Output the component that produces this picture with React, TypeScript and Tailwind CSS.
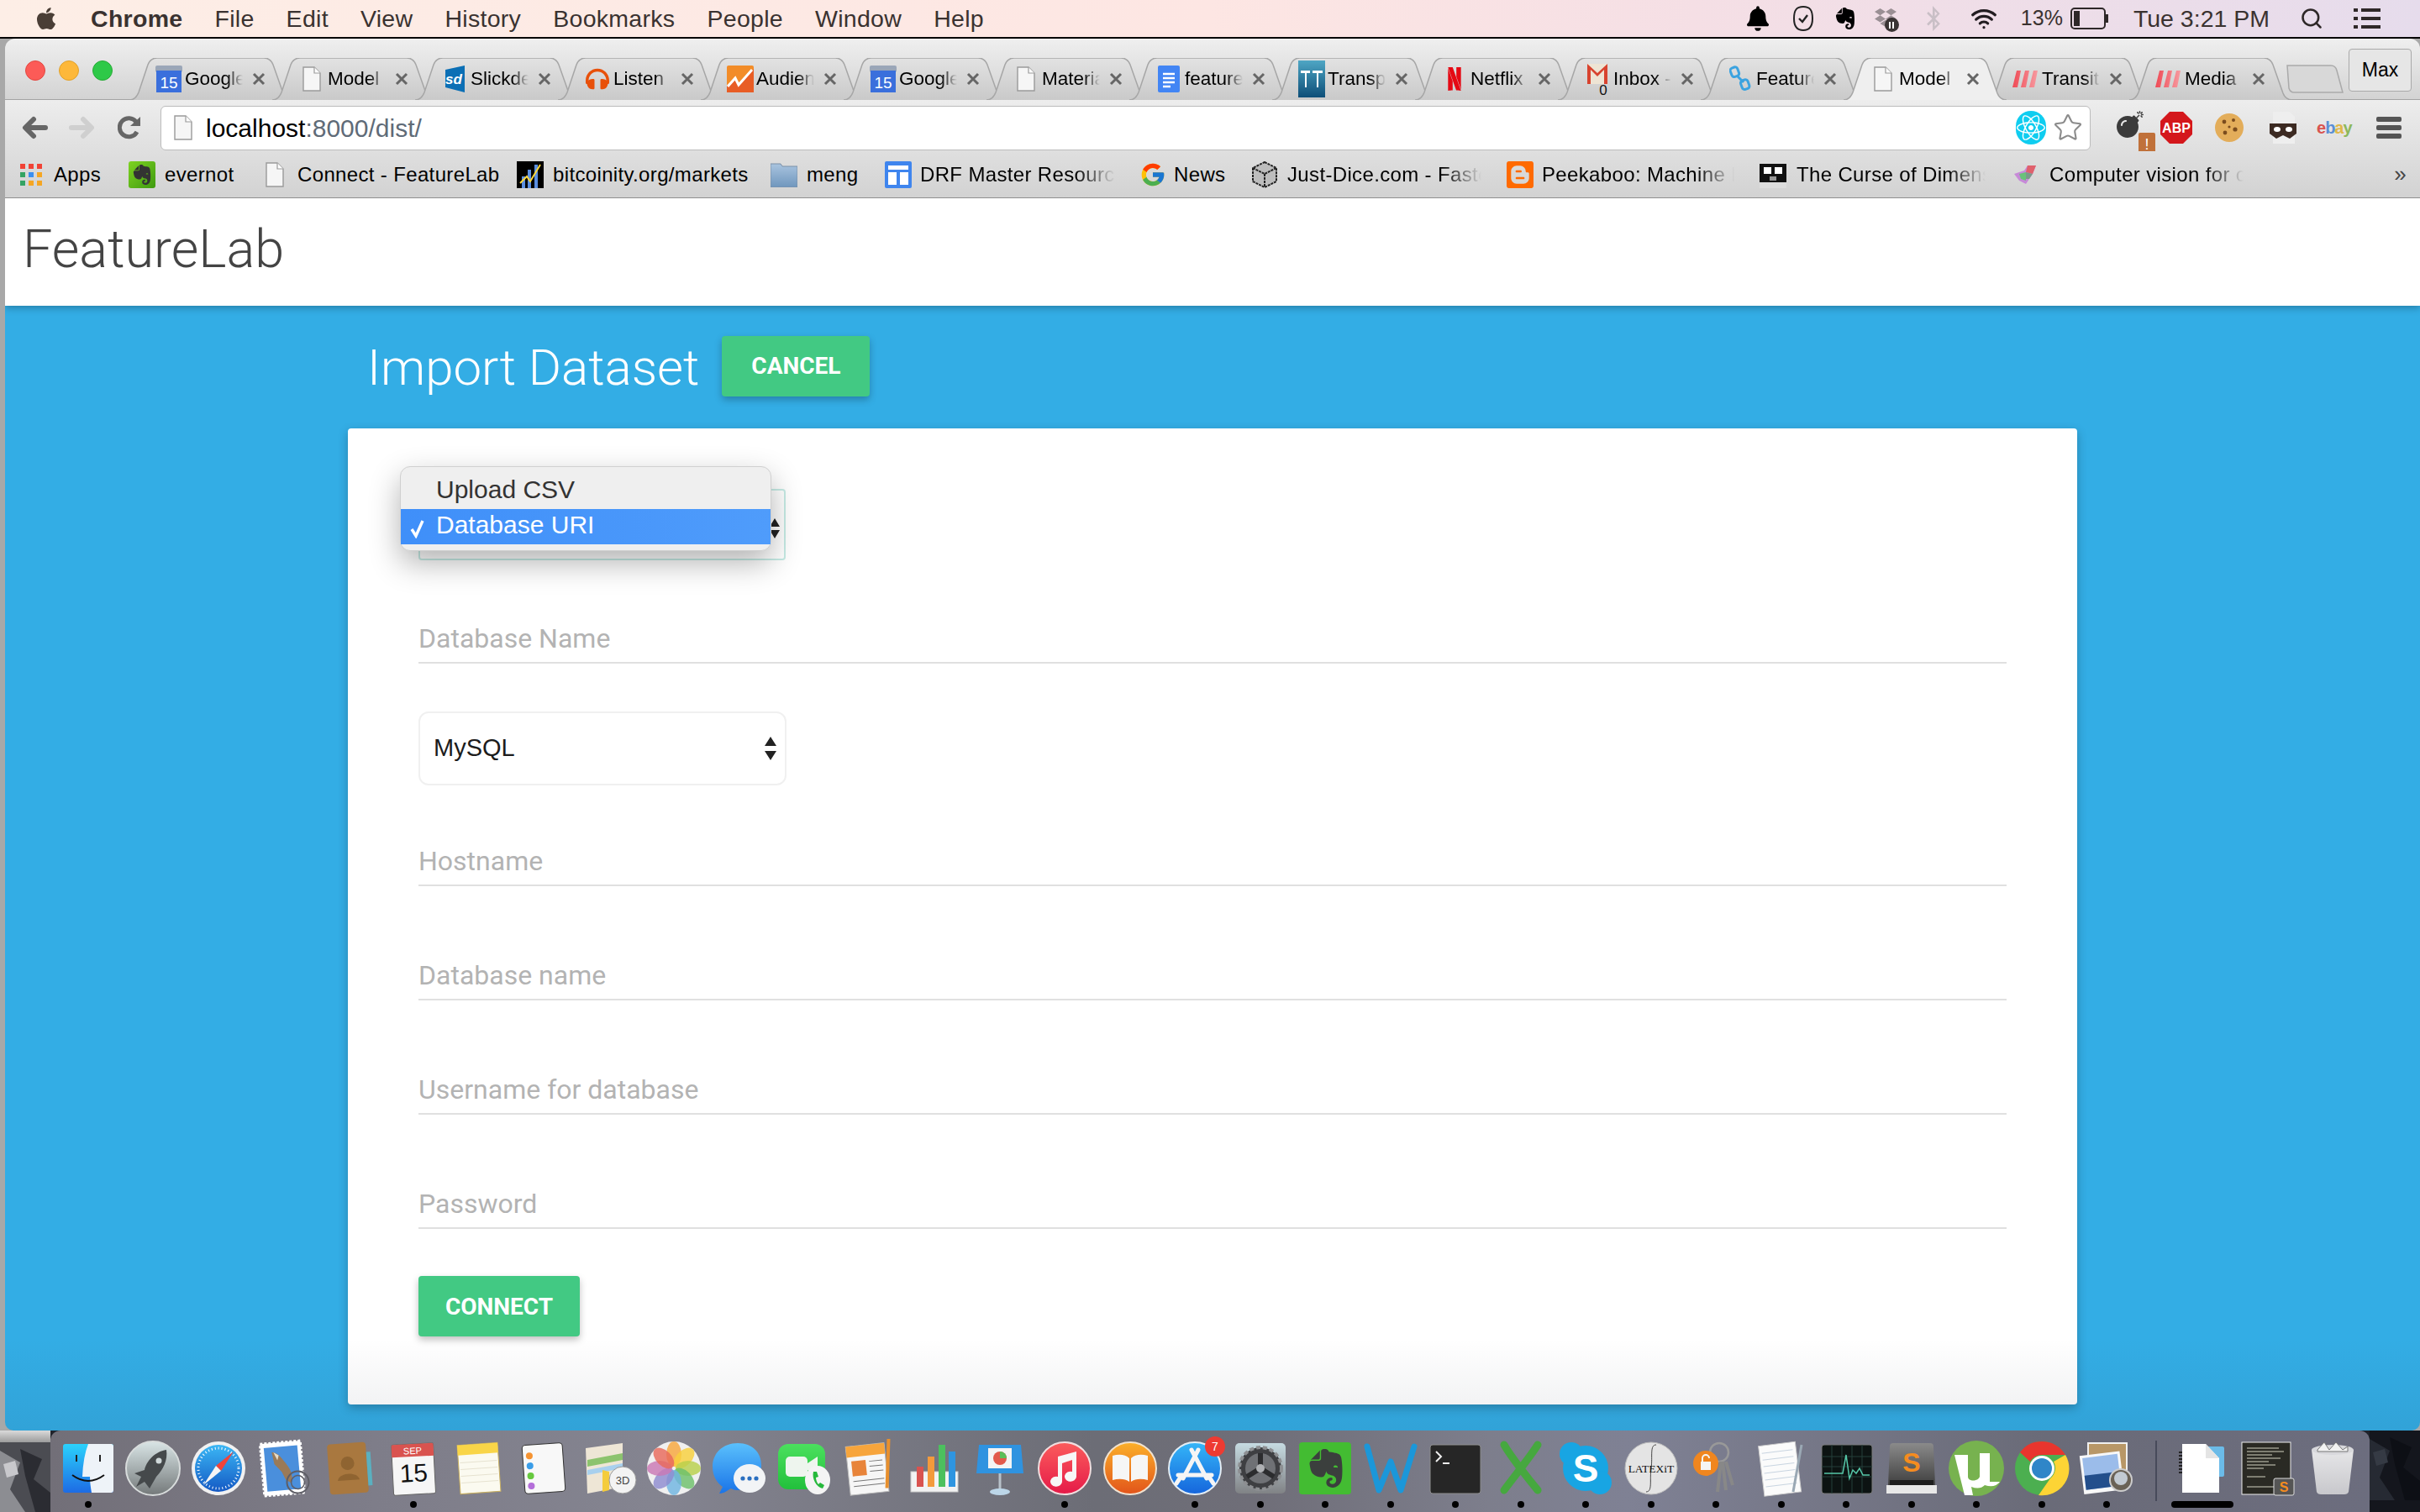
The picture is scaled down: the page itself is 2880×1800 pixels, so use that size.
import type { ReactNode } from "react";
import { FaApple, FaBell, FaBluetoothB, FaBomb, FaDropbox, FaHeadphones, FaReact } from "react-icons/fa";
import { FcGoogle } from "react-icons/fc";
import { SiBlogger, SiEvernote, SiNetflix } from "react-icons/si";
import { Search, Star, Wifi } from "lucide-react";

const Paper = () => (
  <svg width="22" height="30" viewBox="0 0 22 30">
    <path d="M1 1H14L21 8V29H1Z" fill="#f6f6f6" stroke="#9a9a9a" strokeWidth="1.4" />
    <path d="M14 1V8H21" fill="#fff" stroke="#9a9a9a" strokeWidth="1.2" />
  </svg>
);

const GCal = () => (
  <svg width="32" height="32" viewBox="0 0 32 32">
    <rect x="0" y="0" width="32" height="8" rx="2" fill="#9aa6b8" />
    <path d="M1 6H31V32H1Z" fill="#3a6fdc" />
    <text x="16" y="27" textAnchor="middle" fontSize="19" fill="#fff">15</text>
  </svg>
);

const Slick = () => (
  <svg width="32" height="32" viewBox="0 0 32 32">
    <path d="M5 5L28 0V32L5 26Z" fill="#0b6fb5" />
    <text x="15" y="22" textAnchor="middle" fontSize="17" fontWeight="700" fontStyle="italic" fill="#fff">sd</text>
  </svg>
);

const Audience = () => (
  <svg width="32" height="32" viewBox="0 0 32 32">
    <rect width="32" height="32" rx="2" fill="#f28c28" />
    <path d="M0 32V24L10 14L14 22L32 4V32Z" fill="#e85d25" />
    <path d="M1 25L10 15L14 23L30 5" fill="none" stroke="#fff" strokeWidth="3" />
  </svg>
);

const GDoc = () => (
  <svg width="26" height="32" viewBox="0 0 26 32">
    <rect width="26" height="32" rx="2" fill="#4285f4" />
    <path d="M6 10H20M6 15H20M6 20H20M6 25H15" stroke="#fff" strokeWidth="2.4" />
  </svg>
);

const TT = () => (
  <svg width="32" height="44" viewBox="0 0 32 44">
    <defs>
      <linearGradient id="ttg" x1="0" y1="0" x2="0" y2="1">
        <stop offset="0" stopColor="#4ea6c4" />
        <stop offset="1" stopColor="#0d4e78" />
      </linearGradient>
    </defs>
    <rect width="32" height="44" fill="url(#ttg)" />
    <path d="M3 12H14V15H10V32H8V15H3ZM17 12H29V15H24V32H22V15H17Z" fill="#fff" />
  </svg>
);

const Inbox = () => (
  <svg width="26" height="40" viewBox="0 0 26 40">
    <rect x="1" y="2" width="24" height="24" fill="#eee4d4" />
    <path d="M1 2V26H5V9L13 17L21 9V26H25V2L13 13Z" fill="#d8432f" />
    <text x="20" y="39" textAnchor="middle" fontSize="17" fill="#111">0</text>
  </svg>
);

const Links = () => (
  <svg width="26" height="32" viewBox="0 0 26 32" fill="none" stroke="#3ba3e0" strokeWidth="3">
    <rect x="2" y="2" width="9" height="11" rx="3" transform="rotate(-20 7 8)" />
    <rect x="14" y="17" width="9" height="11" rx="3" transform="rotate(-20 19 22)" />
    <path d="M9 12L17 20" />
  </svg>
);

const Transit = () => (
  <svg width="32" height="22" viewBox="0 0 32 22">
    <defs>
      <linearGradient id="trg" x1="0" y1="0" x2="1" y2="0">
        <stop offset="0" stopColor="#ef4a55" />
        <stop offset="1" stopColor="#f79aa0" />
      </linearGradient>
    </defs>
    <path d="M5 1H10L6 21H0ZM15 1H20L16 21H10ZM25 1H30L26 21H20Z" fill="url(#trg)" />
  </svg>
);

type TabData = { title: string; icon: ReactNode; active?: boolean };

const tabs: TabData[] = [
  { title: "Google Calendar", icon: <GCal /> },
  { title: "Model", icon: <Paper /> },
  { title: "Slickdeals", icon: <Slick /> },
  { title: "Listen", icon: <FaHeadphones className="text-[#e8500a] w-[28px] h-[28px]" /> },
  { title: "Audience", icon: <Audience /> },
  { title: "Google Calendar", icon: <GCal /> },
  { title: "Materialize", icon: <Paper /> },
  { title: "feature", icon: <GDoc /> },
  { title: "Transport", icon: <TT /> },
  { title: "Netflix", icon: <SiNetflix className="text-[#e50914] w-[28px] h-[30px]" /> },
  { title: "Inbox -", icon: <Inbox /> },
  { title: "Feature", icon: <Links /> },
  { title: "Model", icon: <Paper />, active: true },
  { title: "Transit", icon: <Transit /> },
  { title: "Media", icon: <Transit /> },
];

function Tab({ tab, i }: { tab: TabData; i: number }) {
  return (
    <div className={`relative w-[194px] h-[50px] shrink-0 ${i > 0 ? "-ml-[24px]" : ""} ${tab.active ? "z-10" : ""}`}>
      <svg className="absolute inset-0" width="194" height="50" viewBox="0 0 194 50">
        <path
          d="M0 50C6 50 9 46 11 41L22 8C24 3 27 0 33 0H160C166 0 169 3 171 8L183 42C185 47 188 50 194 50"
          fill={tab.active ? "#efefef" : "url(#tabfill)"}
          stroke="#a6a6a6"
          strokeWidth="1.5"
        />
      </svg>
      <div className="relative flex items-center h-full pl-[31px]">
        <div className="w-[32px] h-[32px] flex items-center justify-center shrink-0">{tab.icon}</div>
        <span className="ml-[3px] w-[69px] overflow-hidden whitespace-nowrap text-[22.5px] text-black [mask-image:linear-gradient(90deg,#000_72%,transparent)]">
          {tab.title}
        </span>
        <svg className="ml-[11px] shrink-0" width="16" height="16" viewBox="0 0 16 16">
          <path d="M2 2L14 14M14 2L2 14" stroke="#666" strokeWidth="3" />
        </svg>
      </div>
    </div>
  );
}

function MenuBar() {
  return (
    <div className="h-[44px] flex items-center text-[28.5px] text-[#3a3230] bg-[linear-gradient(90deg,#fdeee6,#fde6e3_50%,#f5dfe5_70%,#e6dcec)]">
      <FaApple className="ml-[41px] w-[28px] h-[30px] text-[#4a3e36]" />
      <div className="ml-[39px] flex gap-[38px] tracking-[0.3px]">
        <span className="font-bold">Chrome</span>
        {["File", "Edit", "View", "History", "Bookmarks", "People", "Window", "Help"].map((m) => (
          <span key={m}>{m}</span>
        ))}
      </div>
      <div className="ml-auto flex items-center pr-[47px]">
        <FaBell className="w-[26px] h-[30px] text-black" />
        <svg className="ml-[28px]" width="26" height="32" viewBox="0 0 26 32" fill="none" stroke="#222" strokeWidth="2">
          <path d="M13 2C21 2 24 6 24 16C24 26 20 30 13 30C6 30 2 26 2 16C2 6 5 2 13 2Z" />
          <path d="M8 16L12 20L18 12" strokeWidth="2.4" />
        </svg>
        <SiEvernote className="ml-[24px] w-[26px] h-[32px] text-black" />
        <div className="relative ml-[22px] w-[26px] h-[32px]">
          <FaDropbox className="w-[26px] h-[30px] text-[#9a8f94]" />
          <div className="absolute -right-[3px] bottom-0 w-[17px] h-[17px] rounded-full bg-[#3a3434] flex items-center justify-center gap-[2px]">
            <span className="w-[2px] h-[8px] bg-white" />
            <span className="w-[2px] h-[8px] bg-white" />
          </div>
        </div>
        <FaBluetoothB className="ml-[34px] w-[20px] h-[30px] text-[#c9bfc6]" />
        <Wifi className="ml-[32px] w-[36px] h-[32px] text-[#221c20]" strokeWidth={2.4} />
        <span className="ml-[26px] text-[25px]">13%</span>
        <svg className="ml-[9px]" width="46" height="26" viewBox="0 0 46 26">
          <rect x="1" y="1" width="40" height="24" rx="4" fill="none" stroke="#2e2828" strokeWidth="2" />
          <rect x="4" y="4" width="7" height="18" fill="#2e2828" />
          <rect x="42" y="8" width="3" height="10" fill="#2e2828" />
        </svg>
        <span className="ml-[29px]">Tue 3:21 PM</span>
        <Search className="ml-[36px] w-[28px] h-[30px] text-[#2e2828]" strokeWidth={2.2} />
        <svg className="ml-[36px]" width="32" height="26" viewBox="0 0 32 26" fill="#2e2828">
          <path d="M0 1H5V5H0ZM9 1H32V5H9ZM0 11H5V15H0ZM9 11H32V15H9ZM0 21H5V25H0ZM9 21H32V25H9Z" />
        </svg>
      </div>
    </div>
  );
}

function TabStrip() {
  return (
    <div className="relative h-[73px] flex items-end rounded-t-[12px] border-b-[1.5px] border-[#a3a3a3] bg-[linear-gradient(180deg,#efefef,#d3d3d3)]">
      <svg width="0" height="0" className="absolute">
        <defs>
          <linearGradient id="tabfill" x1="0" y1="0" x2="0" y2="1">
            <stop offset="0" stopColor="#e2e2e2" />
            <stop offset="1" stopColor="#c9c9c9" />
          </linearGradient>
        </defs>
      </svg>
      <div className="absolute left-[24px] top-[26px] flex gap-[16px]">
        <span className="w-[24px] h-[24px] rounded-full bg-[#fc5b57] border border-[#e2463f]" />
        <span className="w-[24px] h-[24px] rounded-full bg-[#fdb83a] border border-[#e1a12a]" />
        <span className="w-[24px] h-[24px] rounded-full bg-[#2ec948] border border-[#27aa35]" />
      </div>
      <div className="flex items-end ml-[148px] -mb-[1px]">
        {tabs.map((t, i) => (
          <Tab key={i} tab={t} i={i} />
        ))}
        <svg className="ml-[-8px] mb-[8px]" width="70" height="34" viewBox="0 0 70 34">
          <path d="M2 1H54C58 1 60 3 61 7L68 33H10C6 33 5 31 4 28Z" fill="#d8d8d8" stroke="#aaa" strokeWidth="1.5" />
        </svg>
      </div>
      <div className="absolute right-[10px] top-[12px] w-[75px] h-[51px] rounded-[4px] border border-[#a9a9a9] bg-[#e6e6e6] flex items-center justify-center text-[23px] text-black">
        Max
      </div>
    </div>
  );
}

function Toolbar() {
  return (
    <div className="h-[61px] pt-[5px] flex items-center bg-[linear-gradient(180deg,#ededed,#dfdfdf)]">
      <svg className="ml-[20px]" width="32" height="28" viewBox="0 0 32 28" fill="none" stroke="#666" strokeWidth="6" strokeLinecap="round" strokeLinejoin="round">
        <path d="M28 14H5M14 4L4 14L14 24" />
      </svg>
      <svg className="ml-[23px]" width="32" height="28" viewBox="0 0 32 28" fill="none" stroke="#cfcfcf" strokeWidth="6" strokeLinecap="round" strokeLinejoin="round">
        <path d="M4 14H27M18 4L28 14L18 24" />
      </svg>
      <svg className="ml-[27px]" width="28" height="28" viewBox="0 0 28 28" fill="none" stroke="#666" strokeWidth="5">
        <path d="M23 19A11 11 0 1 1 22 7" />
        <path d="M15 12L27 12L27 1Z" fill="#666" stroke="none" />
      </svg>
      <div className="ml-[23px] w-[2297px] h-[53px] shrink-0 flex items-center bg-white border border-[#bcbcbc] rounded-[6px]">
        <div className="ml-[15px]"><Paper /></div>
        <span className="ml-[16px] text-[30px] text-black">
          localhost<span className="text-[#5f6b78]">:8000/dist/</span>
        </span>
        <div className="ml-auto flex items-center pr-[8px]">
          <div className="w-[36px] h-[40px] rounded-full bg-[#0fcdf0] flex items-center justify-center">
            <FaReact className="w-[34px] h-[34px] text-white" />
          </div>
          <Star className="ml-[8px] w-[36px] h-[36px] text-[#8b8b8b]" strokeWidth={1.4} fill="#fff" />
        </div>
      </div>
      <div className="relative ml-[31px] w-[40px] h-[44px]">
        <FaBomb className="w-[32px] h-[36px] text-[#3b3b3b]" />
        <div className="absolute right-[-6px] bottom-[-12px] w-[20px] h-[28px] rounded-[2px] bg-[#c0713a] text-white text-[18px] leading-[28px] text-center">!</div>
      </div>
      <svg className="ml-[11px]" width="40" height="40" viewBox="0 0 40 40">
        <path d="M12 1H28L39 12V28L28 39H12L1 28V12Z" fill="#d4171c" />
        <text x="20" y="26" textAnchor="middle" fontSize="16" fontWeight="700" fill="#fff">ABP</text>
      </svg>
      <svg className="ml-[25px]" width="36" height="38" viewBox="0 0 36 38">
        <circle cx="18" cy="19" r="17" fill="#e3ad5a" />
        <circle cx="12" cy="12" r="2.4" fill="#7a4c1e" />
        <circle cx="23" cy="10" r="2" fill="#7a4c1e" />
        <circle cx="25" cy="21" r="2.6" fill="#7a4c1e" />
        <circle cx="13" cy="25" r="2.4" fill="#7a4c1e" />
        <circle cx="18" cy="18" r="1.6" fill="#7a4c1e" />
      </svg>
      <svg className="ml-[28px]" width="36" height="38" viewBox="0 0 36 38">
        <path d="M6 0H26L32 6V38H6Z" fill="#eee" />
        <path d="M2 14H34V26L26 32L18 28L10 32L2 26Z" fill="#3c2a22" />
        <ellipse cx="11" cy="21" rx="4" ry="3" fill="#fff" />
        <ellipse cx="25" cy="21" rx="4" ry="3" fill="#fff" />
      </svg>
      <span className="ml-[22px] w-[44px] text-[20px] font-bold tracking-[-1px] whitespace-nowrap">
        <span className="text-[#d9534f]">e</span>
        <span className="text-[#5b8fd6]">b</span>
        <span className="text-[#e0b84a]">a</span>
        <span className="text-[#8db85a]">y</span>
      </span>
      <div className="ml-[27px] flex flex-col gap-[4px]">
        <span className="w-[30px] h-[6px] rounded-[2px] bg-[#555]" />
        <span className="w-[30px] h-[6px] rounded-[2px] bg-[#555]" />
        <span className="w-[30px] h-[6px] rounded-[2px] bg-[#555]" />
      </div>
    </div>
  );
}

const Apps = () => {
  const c = ["#f14336", "#f14336", "#f14336", "#34a363", "#3b8ff0", "#f5a623", "#34a363", "#f5a623", "#f5a623"];
  return (
    <div className="grid grid-cols-3 gap-[4px] w-[26px]">
      {c.map((x, i) => (
        <span key={i} className="w-[6px] h-[6px]" style={{ background: x }} />
      ))}
    </div>
  );
};

const Bitcoinity = () => (
  <svg width="32" height="32" viewBox="0 0 32 32">
    <rect width="32" height="32" fill="#000" />
    <path d="M6 32V18H10V32ZM13 32V10H17V32ZM21 32V4H25V32Z" fill="#5b8fe0" />
    <path d="M4 26L12 18L16 24L28 4" fill="none" stroke="#ffd83b" strokeWidth="2" />
  </svg>
);

const Folder = () => (
  <svg width="32" height="30" viewBox="0 0 32 30">
    <defs>
      <linearGradient id="folderg" x1="0" y1="0" x2="0" y2="1">
        <stop offset="0" stopColor="#a9c4df" />
        <stop offset="1" stopColor="#6f96bd" />
      </linearGradient>
    </defs>
    <path d="M0 2H12L14 5H32V30H0Z" fill="url(#folderg)" stroke="#7a90a8" />
  </svg>
);

const Drf = () => (
  <svg width="32" height="32" viewBox="0 0 32 32">
    <rect width="32" height="32" rx="2" fill="#3f85ee" />
    <path d="M4 5H28V10H4ZM4 13H14V28H4ZM18 13H28V28H18Z" fill="#fff" />
  </svg>
);

const Dice = () => (
  <svg width="30" height="32" viewBox="0 0 30 32" fill="#bdbdbd" stroke="#222" strokeWidth="2" strokeDasharray="3 1">
    <path d="M15 1L29 8V24L15 31L1 24V8Z" />
    <path d="M1 8L15 15L29 8M15 15V31" fill="none" />
  </svg>
);

const Curse = () => (
  <svg width="32" height="32" viewBox="0 0 32 32">
    <rect width="32" height="32" fill="#ddd" />
    <rect y="3" width="32" height="22" fill="#111" />
    <rect x="5" y="7" width="9" height="8" fill="#fff" />
    <rect x="18" y="7" width="9" height="8" fill="#fff" />
    <rect x="12" y="18" width="8" height="5" fill="#999" />
  </svg>
);

const Cv = () => (
  <svg width="32" height="26" viewBox="0 0 32 26">
    <path d="M2 12L14 8L18 2H28L24 12L16 24L8 20Z" fill="#c78ad8" />
    <path d="M18 2H28L24 12L16 10Z" fill="#e0616c" />
    <path d="M8 12L16 10L16 20L10 18Z" fill="#68c27a" />
    <path d="M16 10L24 12L20 18L16 18Z" fill="#7a9a8a" />
  </svg>
);

const EvernoteFav = () => (
  <div className="w-[32px] h-[32px] rounded-[3px] bg-[linear-gradient(135deg,#7ed321,#3f9a10)] flex items-center justify-center">
    <SiEvernote className="w-[24px] h-[26px] text-[#333]" />
  </div>
);

const bookmarks = [
  { label: "Apps", icon: <Apps />, w: "w-[129px]", box: "w-[40px]" },
  { label: "evernot", icon: <EvernoteFav />, w: "w-[163px]", box: "w-[43px]" },
  { label: "Connect - FeatureLab", icon: <Paper />, w: "w-[299px]", box: "w-[38px]" },
  { label: "bitcoinity.org/markets", icon: <Bitcoinity />, w: "w-[302px]", box: "w-[43px]" },
  { label: "meng", icon: <Folder />, w: "w-[136px]", box: "w-[43px]" },
  { label: "DRF Master Resources", icon: <Drf />, w: "w-[303px]", box: "w-[42px]", fade: "w-[232px]" },
  { label: "News", icon: <FcGoogle className="w-[32px] h-[32px]" />, w: "w-[134px]", box: "w-[41px]" },
  { label: "Just-Dice.com - Fastest", icon: <Dice />, w: "w-[303px]", box: "w-[42px]", fade: "w-[231px]" },
  { label: "Peekaboo: Machine Learning", icon: <SiBlogger className="w-[32px] h-[32px] text-[#ff6a00]" />, w: "w-[301px]", box: "w-[42px]", fade: "w-[229px]" },
  { label: "The Curse of Dimensionality", icon: <Curse />, w: "w-[301px]", box: "w-[44px]", fade: "w-[225px]" },
  { label: "Computer vision for classification", icon: <Cv />, w: "w-[300px]", box: "w-[44px]", fade: "w-[231px]" },
];

function BookmarksBar() {
  return (
    <div className="relative h-[56px] flex items-center pl-[18px] text-[24px] tracking-[0.35px] text-black border-b-[1.5px] border-[#8f8f8f] bg-[linear-gradient(180deg,#dfdfdf,#d2d2d2)]">
      {bookmarks.map((b) => (
        <div key={b.label} className={`${b.w} flex items-center shrink-0`}>
          <div className={`${b.box} shrink-0 flex items-center`}>{b.icon}</div>
          <span className={`whitespace-nowrap overflow-hidden ${b.fade ? `${b.fade} [mask-image:linear-gradient(90deg,#000_80%,transparent)]` : ""}`}>
            {b.label}
          </span>
        </div>
      ))}
      <span className="absolute right-[16px] top-[8px] text-[26px] text-[#444]">»</span>
    </div>
  );
}

function Field({ placeholder, className }: { placeholder: string; className: string }) {
  return (
    <input
      placeholder={placeholder}
      className={`${className} block w-full h-[62px] pt-[3px] border-b-2 border-[#e0e0e0] text-[32px] outline-none placeholder:text-[#b3b3b3]`}
    />
  );
}

function UpDown() {
  return (
    <svg className="absolute right-[12px] top-[30px]" width="14" height="28" viewBox="0 0 14 28" fill="#222">
      <path d="M7 0L14 11H0ZM0 17H14L7 28Z" />
    </svg>
  );
}

function ImportForm() {
  return (
    <div className="ml-[408px] mt-[38px] w-[2058px] h-[1162px] px-[84px] pt-[72px] bg-white rounded-[4px] shadow-[0_4px_12px_rgba(0,0,0,0.25)]">
      <div className="relative w-[437px] h-[85px] border-2 border-[#c6ebe5] rounded-[4px]">
        <div className="absolute right-[5px] top-[33px] w-[12px] h-[24px]">
          <svg width="12" height="24" viewBox="0 0 12 24" fill="#222">
            <path d="M6 0L12 10H0ZM0 14H12L6 24Z" />
          </svg>
        </div>
        <div className="absolute -left-[24px] -top-[29px] w-[442px] h-[101px] pt-[8px] rounded-[12px] bg-[#efefef] border border-[#d0d0d0] shadow-[0_14px_36px_rgba(0,0,0,0.3)] font-['Liberation_Sans',sans-serif] text-[30px] leading-[38px]">
          <div className="h-[42px] pl-[42px] text-[#333]">Upload CSV</div>
          <div className="relative h-[42px] pl-[42px] text-white bg-[linear-gradient(90deg,#3f8ff9,#4f9cfb)]">
            <svg className="absolute left-[10px] top-[11px]" width="20" height="24" viewBox="0 0 20 24" fill="none" stroke="#fff" strokeWidth="3.4">
              <path d="M3 13L8 21L16 3" />
            </svg>
            Database URI
          </div>
        </div>
      </div>
      <Field className="mt-[61px]" placeholder="Database Name" />
      <div className="relative mt-[57px] w-[438px] h-[88px]">
        <select className="w-full h-full pl-[16px] appearance-none bg-white border-2 border-[#f0f0f0] rounded-[12px] text-[29px] text-[#1c1c1c] font-['Liberation_Sans',sans-serif] outline-none">
          <option>MySQL</option>
        </select>
        <UpDown />
      </div>
      <Field className="mt-[58px]" placeholder="Hostname" />
      <Field className="mt-[74px]" placeholder="Database name" />
      <Field className="mt-[74px]" placeholder="Username for database" />
      <Field className="mt-[74px]" placeholder="Password" />
      <button className="mt-[56px] w-[192px] h-[72px] pt-[2px] rounded-[4px] bg-[#42c983] text-white text-[28px] font-bold shadow-[0_4px_8px_rgba(0,0,0,0.25)]">
        CONNECT
      </button>
    </div>
  );
}

function Page() {
  return (
    <div className="relative flex-1 font-['Roboto',sans-serif] rounded-b-[10px] overflow-hidden bg-[#33ade5] flex flex-col">
      <div className="relative h-[128px] pb-[5px] flex items-center pl-[21px] bg-white shadow-[0_3px_8px_rgba(0,0,0,0.25)]">
        <h1 className="text-[63px] font-light text-[#444]">FeatureLab</h1>
      </div>
      <div className="pt-[36px] pl-[431px] flex items-center h-[108px]">
        <h2 className="pt-[3px] text-[60px] font-light text-white leading-[72px]">Import Dataset</h2>
        <button className="ml-[27px] w-[176px] h-[72px] rounded-[4px] bg-[#42c983] text-white text-[28px] font-bold shadow-[0_4px_8px_rgba(0,0,0,0.25)]">
          CANCEL
        </button>
      </div>
      <ImportForm />
      <div className="absolute inset-x-0 bottom-0 h-[110px] pointer-events-none bg-[linear-gradient(180deg,transparent,rgba(30,40,60,0.08))]" />
    </div>
  );
}

/* dock drawings, all on a 68 x 68 box */
const DG = ({ id, a, b }: { id: string; a: string; b: string }) => (
  <linearGradient id={id} x1="0" y1="0" x2="0" y2="1">
    <stop offset="0" stopColor={a} />
    <stop offset="1" stopColor={b} />
  </linearGradient>
);

const dockIcons: { name: string; dot?: boolean; draw: ReactNode }[] = [
  { name: "Finder", dot: true, draw: (
    <>
      <defs><DG id="fin" a="#2bd2fc" b="#1d6be4" /></defs>
      <rect x="4" y="5" width="60" height="58" rx="3" fill="url(#fin)" />
      <path d="M34 5H61Q64 5 64 8V60Q64 63 61 63H38Q36 52 36 44H27Q28 20 34 5Z" fill="#eef3f8" />
      <path d="M20 18V26M48 18V26" stroke="#222" strokeWidth="2" />
      <path d="M15 42Q34 56 53 42" fill="none" stroke="#111" strokeWidth="2" />
    </>
  ) },
  { name: "Launchpad", draw: (
    <>
      <defs><DG id="lau" a="#d9e5e6" b="#74797a" /></defs>
      <circle cx="34" cy="34" r="32" fill="url(#lau)" stroke="#d8dcdc" strokeWidth="2" />
      <path d="M50 12C36 14 26 26 24 36L12 40L20 44L14 56L24 50L30 58L38 44C46 36 52 24 50 12Z" fill="#45494b" />
      <circle cx="41" cy="25" r="3.5" fill="#cfd8d9" />
    </>
  ) },
  { name: "Safari", draw: (
    <>
      <defs><DG id="saf" a="#3bb7f5" b="#1459c4" /></defs>
      <circle cx="34" cy="34" r="32" fill="#f1f1f1" />
      <circle cx="34" cy="34" r="28" fill="url(#saf)" />
      <circle cx="34" cy="34" r="24" fill="none" stroke="#fff" strokeWidth="3" strokeDasharray="1 3" />
      <path d="M52 14L37 37L31 31Z" fill="#f0433a" />
      <path d="M16 54L31 31L37 37Z" fill="#f5f5f5" />
    </>
  ) },
  { name: "Mail", draw: (
    <g transform="rotate(-5 34 34)">
      <rect x="9" y="3" width="48" height="62" fill="#fff" stroke="#fff" strokeWidth="3" strokeDasharray="3 2" />
      <rect x="13" y="8" width="40" height="52" fill="#4a8fdc" />
      <path d="M22 14C28 14 32 20 36 26C42 34 46 44 42 52L36 48L32 38L24 28Z" fill="#9a7a58" />
      <path d="M24 14L30 18L28 24Z" fill="#e8dcc8" />
      <circle cx="50" cy="52" r="13" fill="none" stroke="#5e5e66" strokeWidth="2" />
      <circle cx="50" cy="52" r="8" fill="none" stroke="#5e5e66" strokeWidth="1.5" />
    </g>
  ) },
  { name: "Contacts", draw: (
    <g transform="rotate(-4 34 34)">
      <rect x="10" y="4" width="46" height="60" rx="4" fill="#a9783f" />
      <rect x="56" y="16" width="5" height="40" fill="#5ab0c0" />
      <circle cx="33" cy="28" r="8" fill="#8f6431" />
      <path d="M20 48C22 38 44 38 46 48Z" fill="#8f6431" />
    </g>
  ) },
  { name: "Calendar", dot: true, draw: (
    <g transform="rotate(-3 34 34)">
      <rect x="9" y="5" width="50" height="60" rx="2" fill="#f6f6f6" stroke="#666" />
      <path d="M9 7Q9 5 11 5H57Q59 5 59 7V20H9Z" fill="#d9534f" />
      <text x="34" y="17" textAnchor="middle" fontSize="11" fill="#fff">SEP</text>
      <text x="34" y="50" textAnchor="middle" fontSize="30" fill="#111">15</text>
    </g>
  ) },
  { name: "Notes", draw: (
    <g transform="rotate(-4 34 34)">
      <rect x="10" y="5" width="48" height="58" fill="#fbfaf0" stroke="#c9b060" />
      <rect x="10" y="5" width="48" height="12" fill="#f9d548" />
      <path d="M12 26H56M12 34H56M12 42H56M12 50H56" stroke="#e6e2d0" />
    </g>
  ) },
  { name: "Reminders", draw: (
    <g transform="rotate(-4 34 34)">
      <rect x="10" y="5" width="48" height="58" rx="4" fill="#f8f8f8" stroke="#333" />
      <circle cx="18" cy="18" r="4" fill="#f59331" />
      <circle cx="18" cy="30" r="4" fill="#3a9de8" />
      <circle cx="18" cy="42" r="4" fill="#67c93f" />
      <circle cx="18" cy="54" r="4" fill="#b46ed9" />
    </g>
  ) },
  { name: "Maps", draw: (
    <>
      <path d="M6 10L50 4V56L8 64Z" fill="#eee6d6" />
      <path d="M8 24L50 16V24L8 32Z" fill="#8cc36e" />
      <path d="M8 36L50 28V34L8 42Z" fill="#a8d0ee" />
      <path d="M26 36V62L34 60V38Z" fill="#f4cc3c" />
      <circle cx="50" cy="48" r="16" fill="#f3f3f3" stroke="#999" />
      <text x="50" y="53" textAnchor="middle" fontSize="13" fill="#444">3D</text>
    </>
  ) },
  { name: "Photos", draw: (
    <>
      <circle cx="34" cy="34" r="32" fill="#f0f0f0" />
      {["#f7a63c", "#f8cf3c", "#b8cf4a", "#6dc06a", "#6fb5e0", "#8d8bd0", "#c978b4", "#e8695a"].map((c, i) => (
        <ellipse key={c} cx="34" cy="17" rx="9" ry="15" fill={c} opacity="0.82" transform={`rotate(${i * 45} 34 34)`} />
      ))}
    </>
  ) },
  { name: "Messages", draw: (
    <>
      <defs><DG id="msg" a="#5ac0fc" b="#1a74e8" /></defs>
      <path d="M32 4C14 4 2 16 2 32C2 44 8 52 14 56L10 64C16 64 20 60 24 58C28 60 30 60 32 60C50 60 60 46 60 30C60 16 50 4 32 4Z" fill="url(#msg)" />
      <ellipse cx="46" cy="46" rx="19" ry="17" fill="#f2f4f6" />
      <circle cx="38" cy="46" r="2.6" fill="#2a6fc0" /><circle cx="46" cy="46" r="2.6" fill="#2a6fc0" /><circle cx="54" cy="46" r="2.6" fill="#2a6fc0" />
    </>
  ) },
  { name: "FaceTime", draw: (
    <>
      <defs><DG id="ft" a="#4be05e" b="#22c03c" /></defs>
      <rect x="3" y="5" width="56" height="54" rx="12" fill="url(#ft)" />
      <rect x="12" y="20" width="26" height="24" rx="5" fill="#eef5ee" />
      <path d="M38 28L50 20V44L38 36Z" fill="#eef5ee" />
      <ellipse cx="50" cy="48" rx="15" ry="17" fill="#f4f4f4" />
      <path d="M45 38C43 46 48 56 56 58L58 54L53 51L51 53C49 51 48 47 48 45L51 44L49 38Z" fill="#27b93c" />
    </>
  ) },
  { name: "Pages", draw: (
    <g transform="rotate(-6 30 34)">
      <rect x="8" y="6" width="46" height="58" fill="#f6f6f6" stroke="#bbb" />
      <rect x="8" y="6" width="46" height="13" fill="#f7a53c" />
      <rect x="13" y="24" width="17" height="18" fill="#e8843a" />
      <path d="M34 26H50M34 32H50M34 38H50M13 48H50M13 54H50" stroke="#777" />
      <path d="M60 2L52 60" stroke="#e8902e" strokeWidth="4" />
    </g>
  ) },
  { name: "Numbers", draw: (
    <>
      <rect x="6" y="38" width="56" height="24" fill="#f2f2f2" stroke="#ccc" />
      <rect x="13" y="32" width="8" height="24" fill="#d9534f" />
      <rect x="26" y="20" width="8" height="36" fill="#f39a3c" />
      <rect x="39" y="6" width="8" height="50" fill="#4cc05e" />
      <rect x="51" y="14" width="8" height="42" fill="#2f95e0" />
    </>
  ) },
  { name: "Keynote", draw: (
    <>
      <path d="M9 6H59L62 40H6Z" fill="#2f93e0" />
      <rect x="20" y="10" width="28" height="24" fill="#f4f4f4" />
      <circle cx="34" cy="22" r="8" fill="#e25a4c" />
      <path d="M34 22V14A8 8 0 0 1 42 22Z" fill="#5abf5a" />
      <path d="M34 40V60" stroke="#b8c2ca" strokeWidth="3" />
      <ellipse cx="34" cy="62" rx="12" ry="4" fill="#bcd6e8" />
    </>
  ) },
  { name: "iTunes", dot: true, draw: (
    <>
      <defs><DG id="itu" a="#fb5c5c" b="#e51a48" /></defs>
      <circle cx="34" cy="34" r="31" fill="url(#itu)" stroke="#f1dfe0" strokeWidth="2" />
      <path d="M26 20L48 14V44A7 6 0 1 1 43 38V24L31 28V50A7 6 0 1 1 26 44Z" fill="#f7f7f7" />
    </>
  ) },
  { name: "iBooks", draw: (
    <>
      <defs><DG id="ibo" a="#fbb02a" b="#e2541a" /></defs>
      <circle cx="34" cy="34" r="31" fill="url(#ibo)" stroke="#f0e2d0" strokeWidth="2" />
      <path d="M33 22C28 17 20 17 13 19V48C20 46 28 46 33 50ZM35 22C40 17 48 17 55 19V48C48 46 40 46 35 50Z" fill="#f6f6f6" />
    </>
  ) },
  { name: "App Store", dot: true, draw: (
    <>
      <defs><DG id="aps" a="#34b6f8" b="#1565dc" /></defs>
      <circle cx="34" cy="34" r="31" fill="url(#aps)" stroke="#e4eef5" strokeWidth="2" />
      <path d="M38 12L20 46M30 12L48 46M14 42H54M12 52L16 46M56 52L52 46" stroke="#f5f5f5" strokeWidth="5" strokeLinecap="round" />
      <circle cx="58" cy="8" r="12" fill="#ee3b32" />
      <text x="58" y="13" textAnchor="middle" fontSize="14" fill="#fff">7</text>
    </>
  ) },
  { name: "System Preferences", dot: true, draw: (
    <>
      <defs><DG id="prf" a="#c6dbe2" b="#808285" /></defs>
      <rect x="4" y="4" width="60" height="60" rx="5" fill="url(#prf)" />
      <circle cx="34" cy="34" r="25" fill="#3e3f42" stroke="#8d8f92" strokeWidth="4" strokeDasharray="5 3" />
      <circle cx="34" cy="34" r="18" fill="#6f7175" />
      <path d="M34 34V16M34 34L18 44M34 34L50 44" stroke="#2b2c2e" strokeWidth="6" />
      <circle cx="34" cy="34" r="5" fill="#aeb0b3" />
    </>
  ) },
  { name: "Evernote", dot: true, draw: (
    <>
      <rect x="3" y="3" width="62" height="62" rx="4" fill="#43bc32" />
      <foreignObject x="12" y="10" width="46" height="48">
        <SiEvernote className="w-[46px] h-[48px] text-[#3b3f3d]" />
      </foreignObject>
    </>
  ) },
  { name: "Word", dot: true, draw: (
    <path d="M6 8L20 60L34 26L46 60L62 8" fill="none" stroke="#1b97d9" strokeWidth="7" strokeLinecap="round" strokeLinejoin="round" />
  ) },
  { name: "Terminal", dot: true, draw: (
    <>
      <rect x="4" y="6" width="60" height="58" rx="3" fill="#262626" stroke="#8e8e8e" />
      <path d="M11 14L17 20L11 26" fill="none" stroke="#eee" strokeWidth="2" />
      <path d="M19 28H27" stroke="#eee" strokeWidth="2" />
    </>
  ) },
  { name: "Excel", dot: true, draw: (
    <path d="M14 6C22 20 44 48 54 60M54 6C44 22 24 46 14 60" fill="none" stroke="#46a83f" strokeWidth="9" strokeLinecap="round" />
  ) },
  { name: "Skype", dot: true, draw: (
    <>
      <circle cx="34" cy="34" r="27" fill="#18a5e3" />
      <circle cx="17" cy="17" r="14" fill="#18a5e3" />
      <circle cx="51" cy="51" r="14" fill="#18a5e3" />
      <text x="34" y="50" textAnchor="middle" fontSize="46" fontWeight="700" fill="#fff">S</text>
    </>
  ) },
  { name: "LaTeXiT", dot: true, draw: (
    <>
      <circle cx="34" cy="34" r="31" fill="#e4e4e4" stroke="#bbb" />
      <path d="M40 6C32 6 36 20 34 34C32 48 36 62 28 62" fill="none" stroke="#444" />
      <text x="34" y="39" textAnchor="middle" fontSize="13.5" fill="#111" fontFamily="'Liberation Serif',serif">LATEXiT</text>
    </>
  ) },
  { name: "Keychain", dot: true, draw: (
    <>
      <circle cx="38" cy="15" r="11" fill="none" stroke="#999" strokeWidth="2.5" />
      <path d="M40 26L36 62M46 26L54 54M42 26L46 60" stroke="#888" strokeWidth="4" />
      <circle cx="22" cy="28" r="15" fill="#f0861f" />
      <rect x="16" y="26" width="12" height="10" fill="#f5f5f5" />
      <path d="M18 26V22A4 4 0 0 1 26 22" fill="none" stroke="#f5f5f5" strokeWidth="2" />
    </>
  ) },
  { name: "TextEdit", dot: true, draw: (
    <>
      <g transform="rotate(-7 30 34)">
        <rect x="10" y="5" width="44" height="60" fill="#fbfbfb" stroke="#ccc" />
        <path d="M13 14H50M13 22H50M13 30H50M13 38H50M13 46H50M13 54H50" stroke="#c8d4e0" />
      </g>
      <path d="M58 6L48 62" stroke="#9aa8b4" strokeWidth="3" />
    </>
  ) },
  { name: "Activity Monitor", dot: true, draw: (
    <>
      <rect x="5" y="6" width="60" height="58" rx="3" fill="#0c1312" stroke="#7a7a7a" />
      <path d="M5 20H65M5 32H65M5 44H65M17 6V64M29 6V64M41 6V64M53 6V64" stroke="#24403a" />
      <path d="M8 40H26L30 40L34 18L38 46L42 36L46 40L50 34L54 42H62" fill="none" stroke="#55c7a8" strokeWidth="1.5" />
    </>
  ) },
  { name: "Sublime Text", dot: true, draw: (
    <>
      <defs><DG id="sub" a="#8a8a8a" b="#3f3f3f" /></defs>
      <path d="M8 8Q8 4 12 4H56Q60 4 60 8L62 54H6Z" fill="url(#sub)" />
      <rect x="4" y="54" width="60" height="10" fill="#e8e8e8" />
      <rect x="8" y="48" width="52" height="6" fill="#1e1e1e" />
      <text x="34" y="38" textAnchor="middle" fontSize="32" fontWeight="700" fill="#f58c1f">S</text>
    </>
  ) },
  { name: "uTorrent", dot: true, draw: (
    <>
      <circle cx="34" cy="34" r="33" fill="#77b24f" />
      <path d="M8 18H24V44C24 50 36 50 38 44V16H50V50H62Q56 58 44 54Q38 60 28 56L30 66H20Z" fill="#fff" />
    </>
  ) },
  { name: "Chrome", dot: true, draw: (
    <>
      <circle cx="34" cy="34" r="32" fill="#4caf50" />
      <path d="M34 2A32 32 0 0 1 62 18H34A16 16 0 0 0 20 26L8 15A32 32 0 0 1 34 2Z" fill="#e8352e" />
      <path d="M62 18A32 32 0 0 1 30 66L44 46A16 16 0 0 0 48 26Z" fill="#fdd435" />
      <circle cx="34" cy="34" r="15" fill="#fff" />
      <circle cx="34" cy="34" r="12" fill="#2f86c8" />
    </>
  ) },
  { name: "Preview", dot: true, draw: (
    <>
      <rect x="12" y="4" width="46" height="40" fill="#b89767" stroke="#f0f0f0" strokeWidth="2" />
      <g transform="rotate(-7 30 36)">
        <rect x="4" y="16" width="48" height="46" fill="#f8f8f8" />
        <rect x="7" y="19" width="42" height="38" fill="#9bbcea" />
        <path d="M7 40H49V57H7Z" fill="#234f8c" />
      </g>
      <circle cx="51" cy="48" r="13" fill="#6a6256" stroke="#ccc" strokeWidth="2" />
      <circle cx="51" cy="46" r="8" fill="#c2cad2" />
    </>
  ) },
];

const stackIcons: { name: string; draw: ReactNode }[] = [
  { name: "Documents", draw: (
    <>
      <rect x="34" y="8" width="26" height="36" rx="2" fill="#6bbbe8" />
      <path d="M10 5H38L54 22V63H10Z" fill="#fff" />
      <path d="M38 5V22H54Z" fill="#e4e4e4" />
      <path d="M8 14V42" stroke="#222" strokeWidth="4" strokeDasharray="2 2" />
    </>
  ) },
  { name: "Screenshots", draw: (
    <>
      <rect x="4" y="3" width="58" height="62" fill="#2a2a24" stroke="#eee" />
      <path d="M10 10H48M10 14H54M10 18H40M10 22H50M10 26H36M10 30H44M10 34H30M10 44H32M10 56H54" stroke="#9b9b8c" strokeWidth="1.4" />
      <rect x="42" y="46" width="24" height="20" rx="2" fill="#555" stroke="#ddd" />
      <text x="54" y="62" textAnchor="middle" fontSize="16" fontWeight="700" fill="#f58c1f">S</text>
    </>
  ) },
  { name: "Trash", draw: (
    <>
      <defs><DG id="tr" a="#e6e6e8" b="#c8c8cc" /></defs>
      <path d="M9 12H59L53 62Q52 65 48 65H20Q16 65 15 62Z" fill="url(#tr)" />
      <ellipse cx="34" cy="12" rx="25" ry="6" fill="#d8d8dc" />
      <path d="M16 12L24 3L30 12L38 3L46 12L52 8V14H16Z" fill="#f2f2f2" stroke="#777" />
    </>
  ) },
];

function DockSlot({ children, dot }: { children: ReactNode; dot?: boolean }) {
  return (
    <div className="w-[77.5px] shrink-0 flex flex-col items-center">
      <svg width="68" height="68" viewBox="0 0 68 68" className="overflow-visible font-['Liberation_Sans',sans-serif]">
        {children}
      </svg>
      <span className={`mt-[5px] w-[8px] h-[8px] rounded-full ${dot ? "bg-black" : ""}`} />
    </div>
  );
}

function Wallpaper({ className, light }: { className: string; light?: boolean }) {
  return (
    <div className={`${className} relative overflow-hidden ${light ? "bg-[#4b4c52]" : "bg-[#14161d]"}`}>
      <svg className="absolute inset-0" width="60" height="97" viewBox="0 0 60 97">
        <path d="M0 10L24 24L12 56L30 83H0Z" fill={light ? "#8c8d92" : "#262a33"} />
        <path d="M24 8L50 20L40 44L60 60V83H42L30 40Z" fill={light ? "#2b2c32" : "#0d0f15"} />
        <path d="M4 26L18 22L22 38L8 42Z" fill={light ? "#c8c8cc" : "#353a44"} />
      </svg>
    </div>
  );
}

function BottomRow() {
  return (
    <div className="h-[97px] flex">
      <div className="w-[60px] flex flex-col">
        <div className="h-[14px] bg-[linear-gradient(180deg,#dadada,#9c9c9c)]" />
        <Wallpaper className="flex-1" light />
      </div>
      <div className="w-[2760px] pt-[11px] pl-[6px] flex rounded-t-[12px] bg-[linear-gradient(90deg,#726f78,#7e7d89_14%,#848490_26%,#6c6d76_45%,#6f6e78_52%,#7d7e8c_62%,#7f8194_68%,#6a6b78_86%,#6c6d7e)]">
        {dockIcons.map((d) => (
          <DockSlot key={d.name} dot={d.dot}>{d.draw}</DockSlot>
        ))}
        <div className="ml-[19px] mr-[15px] w-[2px] h-[72px] mt-[1px] shrink-0 bg-[#474a5a]" />
        <div className="flex relative">
          {stackIcons.map((d) => (
            <DockSlot key={d.name}>{d.draw}</DockSlot>
          ))}
          <span className="absolute left-[2px] top-[73px] w-[74px] h-[8px] rounded-full bg-black" />
        </div>
      </div>
      <Wallpaper className="flex-1" />
    </div>
  );
}

export default function App() {
  return (
    <div className="w-[2880px] h-[1800px] overflow-hidden flex flex-col font-['Liberation_Sans',sans-serif] bg-[#20232b]">
      <MenuBar />
      <div className="h-[2px] bg-black" />
      <div className="flex-1 flex min-h-0 bg-[#a8a8a8]">
        <div className="w-[6px] shrink-0" />
        <div className="flex-1 flex flex-col min-w-0">
          <TabStrip />
          <Toolbar />
          <BookmarksBar />
          <Page />
        </div>
      </div>
      <BottomRow />
    </div>
  );
}
